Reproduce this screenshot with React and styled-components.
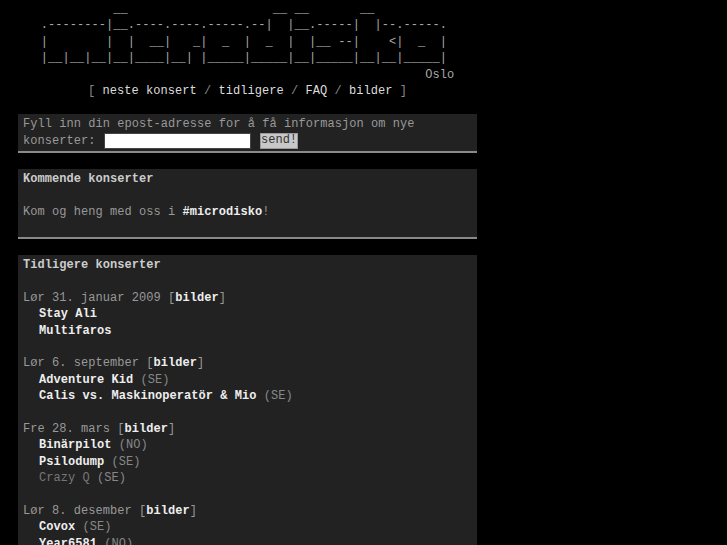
import React from 'react';
import styled, { createGlobalStyle } from 'styled-components';

const Global = createGlobalStyle`
  html, body {
    margin: 0;
    background: #000;
  }
  body {
    font-family: "Liberation Mono", "Courier New", monospace;
    font-size: 12px;
    letter-spacing: 0.05px;
    line-height: 16.4px;
    color: #999;
  }
`;

const LOGO = [
  '          __                    __ __       __',
  '.--------|__.----.----.-----.--|  |__.-----|  |--.-----.',
  '|        |  |  __|   _|  _  |  _  |  |__ --|    <|  _  |',
  '|__|__|__|__|____|__| |_____|_____|__|_____|__|__|_____|',
  '                                                     Oslo',
];

const lenker = ['neste konsert', 'tidligere', 'FAQ', 'bilder'];

const konserter = [
  {
    dato: 'Lør 31. januar 2009',
    band: [{ navn: 'Stay Ali' }, { navn: 'Multifaros' }],
  },
  {
    dato: 'Lør 6. september',
    band: [
      { navn: 'Adventure Kid', land: 'SE' },
      { navn: 'Calis vs. Maskinoperatör & Mio', land: 'SE' },
    ],
  },
  {
    dato: 'Fre 28. mars',
    band: [
      { navn: 'Binärpilot', land: 'NO' },
      { navn: 'Psilodump', land: 'SE' },
      { navn: 'Crazy Q', land: 'SE', avlyst: true },
    ],
  },
  {
    dato: 'Lør 8. desember',
    band: [
      { navn: 'Covox', land: 'SE' },
      { navn: 'Year6581', land: 'NO' },
      { navn: 'Goto80', land: 'SE' },
    ],
  },
];

function App() {
  return (
    <>
      <Global />
      <Side>
        <Topp>
          <Logo>{LOGO.join('\n')}</Logo>
        </Topp>

        <Meny>
          [{' '}
          {lenker.map((l, i) => (
            <React.Fragment key={l}>
              {i > 0 && <Skille> / </Skille>}
              <MenyLenke href="#">{l}</MenyLenke>
            </React.Fragment>
          ))}{' '}
          ]
        </Meny>

        <Boks $skjema>
          Fyll inn din epost-adresse for å få informasjon om nye konserter:{' '}
          <Epost type="text" />{' '}
          <Send>send!</Send>
        </Boks>

        <Boks>
          <Tittel>Kommende konserter</Tittel>
          <Avsnitt>
            Kom og heng med oss i <Fet>#microdisko</Fet>!
          </Avsnitt>
        </Boks>

        <Boks>
          <Tittel>Tidligere konserter</Tittel>
          {konserter.map((k) => (
            <Konsert key={k.dato}>
              <div>
                {k.dato} [<Fet>bilder</Fet>]
              </div>
              {k.band.map((b) => (
                <Band key={b.navn} $avlyst={b.avlyst}>
                  {b.avlyst ? b.navn : <Fet>{b.navn}</Fet>}
                  {b.land && <Land> ({b.land})</Land>}
                </Band>
              ))}
            </Konsert>
          ))}
        </Boks>
      </Side>
    </>
  );
}

const Side = styled.div`
  width: 459px;
  margin-left: 18px;
`;

const Topp = styled.div`
  text-align: center;
`;

const Logo = styled.pre`
  display: inline-block;
  margin: 1px 0 0;
  text-align: left;
  font: inherit;
  color: #a8a8a8;
`;

const Meny = styled.div`
  text-align: center;
  color: #888;
  margin-bottom: 15px;
`;

const Skille = styled.span`
  color: #888;
`;

const MenyLenke = styled.a`
  color: #ddd;
  text-decoration: none;
`;

const Boks = styled.div`
  background: #222;
  padding: 2px 5px ${(p) => (p.$skjema ? '2px' : '0')};
  border-bottom: 2px solid #8a8a8a;
  margin-bottom: 16px;
`;

const Tittel = styled.div`
  font-weight: bold;
  color: #ccc;
  margin-bottom: 16.4px;
`;

const Avsnitt = styled.div`
  margin-bottom: 16.4px;
`;

const Fet = styled.b`
  color: #eee;
`;

const Konsert = styled.div`
  margin-bottom: 16.4px;
`;

const Band = styled.div`
  padding-left: 16px;
  color: ${(p) => (p.$avlyst ? '#777' : '#999')};
`;

const Land = styled.span`
  color: #888;
`;

const Epost = styled.input`
  box-sizing: border-box;
  width: 147px;
  height: 16px;
  margin: 0 1px;
  padding: 0 2px;
  border: 1px solid #444;
  background: #fff;
  vertical-align: middle;
  font: inherit;
`;

const Send = styled.button`
  box-sizing: border-box;
  height: 16px;
  margin: 0 1px;
  padding: 0;
  border: 1px solid #999;
  background: #c8c8c8;
  color: #333;
  font: inherit;
  line-height: 13px;
  vertical-align: middle;
`;

export default App;
